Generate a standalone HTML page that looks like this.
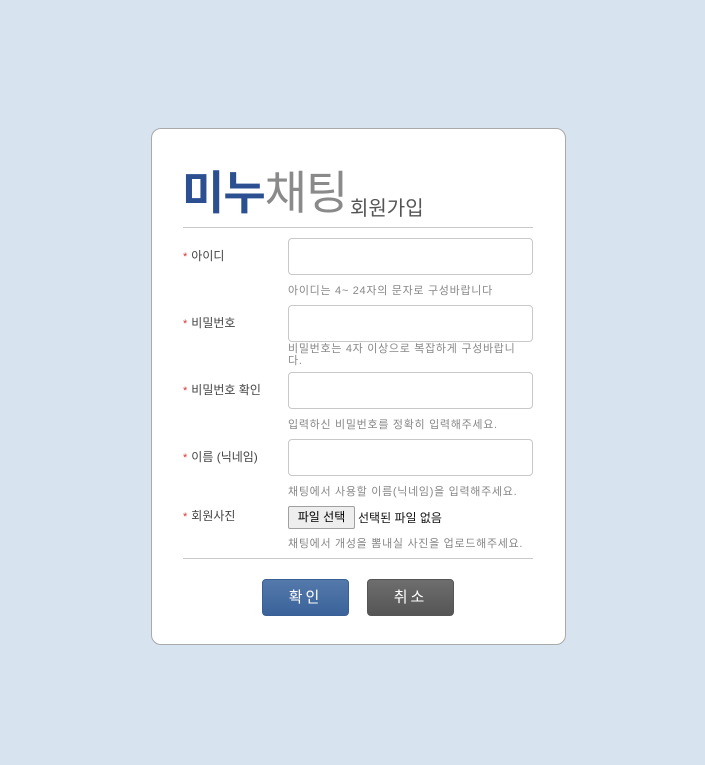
<!DOCTYPE html><html><head><meta charset="utf-8"><style>
body{margin:0;width:705px;height:765px;background:#d7e3ef;font-family:"Liberation Sans","Noto Sans CJK KR","NanumGothic",sans-serif;position:relative;overflow:hidden}
.card{position:absolute;left:151px;top:128px;width:413px;height:515px;background:#fff;border:1px solid #a9a9a9;border-radius:10px}
.a{position:absolute;white-space:nowrap}
.lbl{font-size:12px;color:#444;left:183px}
.lbl b{color:#d33;font-weight:normal;font-size:11px;margin-right:4px}
.in{position:absolute;left:288px;width:243px;height:35px;border:1px solid #c8c8c8;border-radius:4px;background:#fff}
.hint{left:288px;font-size:11px;color:#888;letter-spacing:.7px}
.line{position:absolute;left:183px;width:350px;height:1px;background:#c8c8c8}
.btn{position:absolute;top:579px;width:86px;height:35px;border-radius:4px;color:#fff;font-size:15px;text-align:center;line-height:35px;letter-spacing:3px}
</style></head><body>
<div class="card"></div>
<div class="a" style="left:182px;top:167px;font-size:46px;line-height:52px;letter-spacing:-1px"><span style="color:#2b4f91;font-weight:bold">미누</span><span style="color:#8a8a8a">채팅</span></div>
<div class="a" style="left:350px;top:192px;font-size:20px;color:#555">회원가입</div>
<div class="line" style="top:227px"></div>
<div class="a lbl" style="top:247px"><b>*</b>아이디</div>
<div class="in" style="top:238px"></div>
<div class="a hint" style="top:282px">아이디는 4~ 24자의 문자로 구성바랍니다</div>
<div class="a lbl" style="top:314px"><b>*</b>비밀번호</div>
<div class="in" style="top:305px"></div>
<div class="a hint" style="top:343px;line-height:12px;white-space:normal;width:238px">비밀번호는 4자 이상으로 복잡하게 구성바랍니다.</div>
<div class="a lbl" style="top:381px"><b>*</b>비밀번호 확인</div>
<div class="in" style="top:372px"></div>
<div class="a hint" style="top:416px">입력하신 비밀번호를 정확히 입력해주세요.</div>
<div class="a lbl" style="top:448px"><b>*</b>이름 (닉네임)</div>
<div class="in" style="top:439px"></div>
<div class="a hint" style="top:483px">채팅에서 사용할 이름(닉네임)을 입력해주세요.</div>
<div class="a lbl" style="top:507px"><b>*</b>회원사진</div>
<div class="a" style="left:288px;top:506px;width:65px;height:21px;border:1px solid #a0a0a0;background:#eee;font-size:12px;text-align:center;line-height:21px;border-radius:2px">파일 선택</div>
<div class="a" style="left:358px;top:509px;font-size:12px;color:#111">선택된 파일 없음</div>
<div class="a hint" style="top:535px">채팅에서 개성을 뽐내실 사진을 업로드해주세요.</div>
<div class="line" style="top:558px"></div>
<div class="btn" style="left:262px;background:linear-gradient(#5479ab,#3b639a);border:1px solid #3a5f94;width:85px">확인</div>
<div class="btn" style="left:367px;background:linear-gradient(#6e6e6e,#555);border:1px solid #555;width:85px">취소</div>
</body></html>
